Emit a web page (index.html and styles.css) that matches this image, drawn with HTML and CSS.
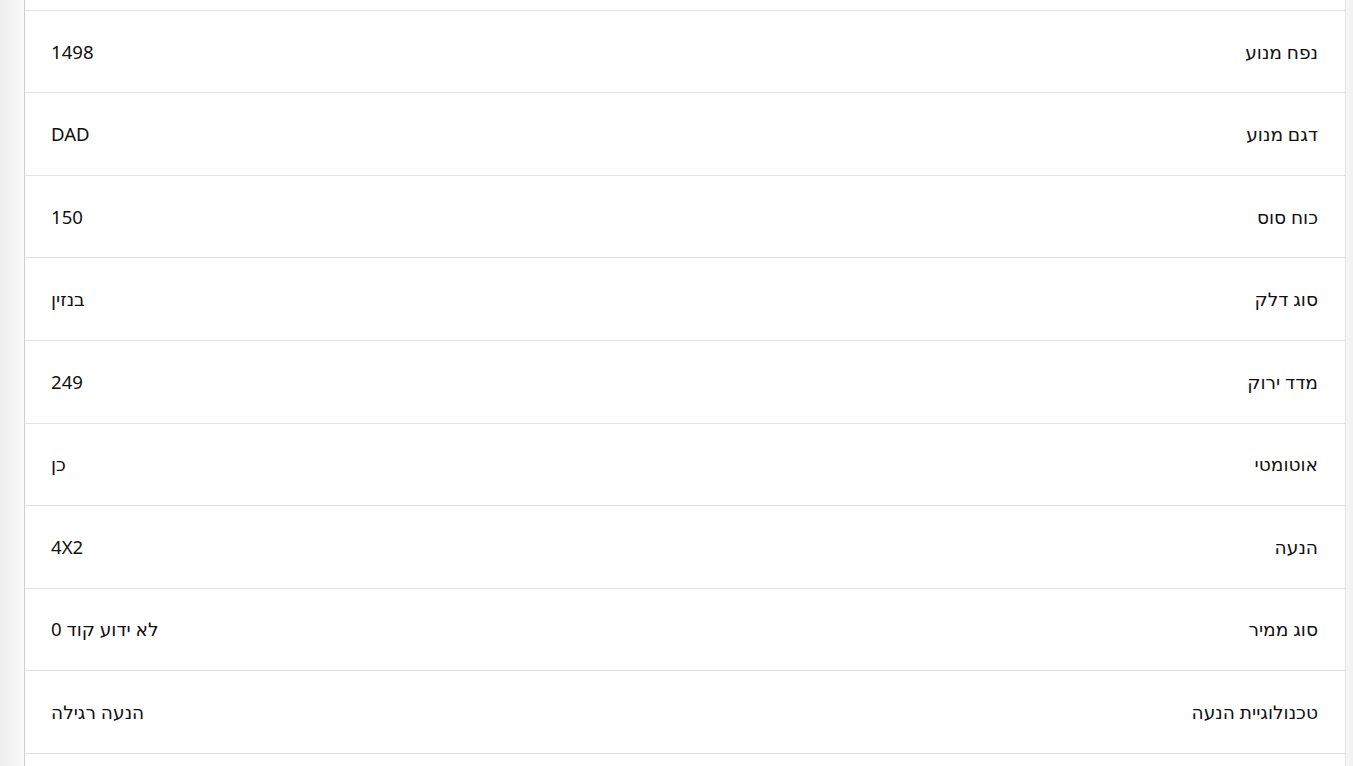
FILE: index.html
```html
<!DOCTYPE html>
<html lang="he" dir="rtl">
<head>
<meta charset="utf-8">
<link rel="stylesheet" href="styles.css">
</head>
<body>
<div class="page">
  <div class="card">
    <div class="row row-partial"></div>
    <div class="row"><span class="label">נפח מנוע</span><span class="value">1498</span></div>
    <div class="row"><span class="label">דגם מנוע</span><span class="value">DAD</span></div>
    <div class="row"><span class="label">כוח סוס</span><span class="value">150</span></div>
    <div class="row"><span class="label">סוג דלק</span><span class="value">בנזין</span></div>
    <div class="row"><span class="label">מדד ירוק</span><span class="value">249</span></div>
    <div class="row"><span class="label">אוטומטי</span><span class="value">כן</span></div>
    <div class="row"><span class="label">הנעה</span><span class="value">4X2</span></div>
    <div class="row"><span class="label">סוג ממיר</span><span class="value">לא ידוע קוד 0</span></div>
    <div class="row"><span class="label">טכנולוגיית הנעה</span><span class="value">הנעה רגילה</span></div>
    <div class="row"></div>
  </div>
</div>
</body>
</html>
```

FILE: styles.css
```css
html, body {
  margin: 0;
  padding: 0;
  height: 100%;
  overflow: hidden;
}
body {
  background: #f7f7f7;
  font-family: "Noto Sans", "DejaVu Sans", sans-serif;
  color: #111;
}
.page {
  display: flex;
  justify-content: center;
  padding-left: 24px;
  padding-right: 7px;
  background: linear-gradient(to right, #eeeeee 0px, #f9f9f9 24px, #f9f9f9 calc(100% - 8px), #f0f0f0 100%);
  min-height: 100%;
}
.card {
  flex: 1;
  background: #fff;
  border-left: 1px solid #cfcfcf;
  border-right: 1px solid #e2e2e2;
}
.row {
  display: flex;
  justify-content: space-between;
  align-items: center;
  height: 82.55px;
  box-sizing: border-box;
  border-bottom: 1px solid #e3e3e3;
  padding: 0 27px 0 26px;
  font-size: 18.6px;
  line-height: 22px;
}
.row-partial {
  height: 10.8px;
}
.label, .value {
  white-space: nowrap;
}
```
